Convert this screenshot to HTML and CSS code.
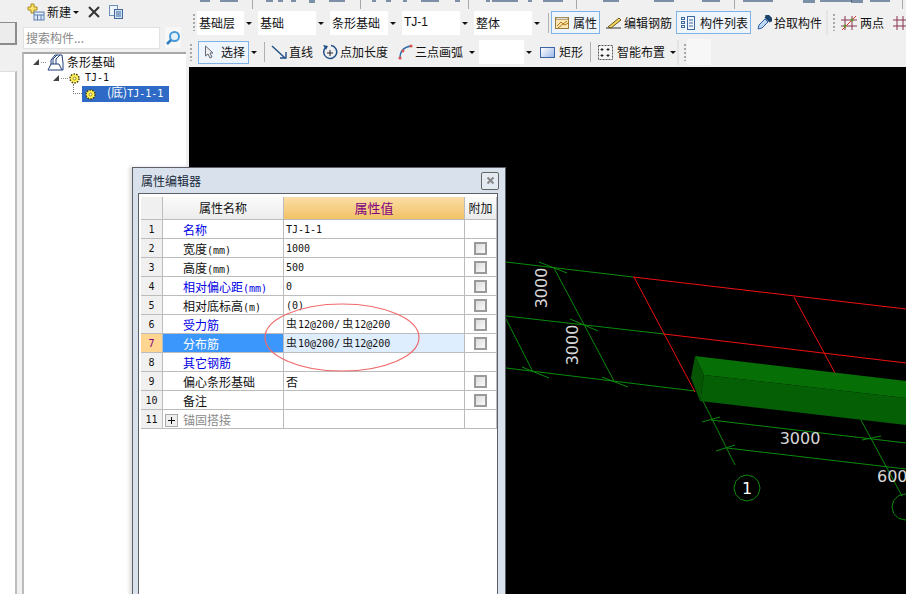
FILE: index.html
```html
<!DOCTYPE html>
<html lang="zh-CN">
<head>
<meta charset="utf-8">
<title>属性编辑器</title>
<link rel="stylesheet" href="styles.css">
</head>
<body>
<div class="app">
  <aside class="rail">
    <div class="rail-top"></div>
    <div class="rail-tab"></div>
    <div class="rail-rest"></div>
  </aside>

  <section class="panel">
    <div class="panel-tools">
      <svg class="ic new-ic" width="18" height="18" viewBox="0 0 18 18"><path d="M4 1h3v3h3v3H7v3H4V7H1V4h3z" fill="#ffe26a" stroke="#a88a1c"/><rect x="7" y="9" width="10" height="8" fill="#dfe9f7" stroke="#5c7fb0"/><path d="M7 12h10M10.500 12v5M14 12v5" stroke="#5c7fb0"/></svg>
      <span class="tool-text">新建</span><span class="caret"></span>
      <svg class="ic del-ic" width="14" height="14" viewBox="0 0 14 14"><path d="M2 2l10 10M12 2L2 12" stroke="#333" stroke-width="2"/></svg>
      <svg class="ic copy-ic" width="16" height="16" viewBox="0 0 16 16"><rect x="1.500" y="1.500" width="8" height="10" fill="#eef4fb" stroke="#6f8fb8"/><rect x="6.500" y="5.500" width="8" height="9" fill="#d3e3f6" stroke="#41689c"/><path d="M8 8h5M8 10h5M8 12h5" stroke="#41689c"/></svg>
    </div>
    <div class="search-row">
      <div class="search-box">搜索构件...</div>
      <div class="search-btn">
        <svg width="16" height="16" viewBox="0 0 16 16"><circle cx="9.500" cy="6.500" r="4.500" fill="#e6f3fd" stroke="#4a9ad8" stroke-width="2"/><path d="M6 10l-4 4" stroke="#2f7fc0" stroke-width="2.500"/></svg>
      </div>
    </div>
    <div class="tree">
      <div class="tree-row root">
        <span class="twist"></span><span class="dots"></span>
        <svg class="tree-ic" width="17" height="17" viewBox="0 0 17 17"><path d="M1 16l3-6V6l4-5h7l1 8v7z" fill="#fff" stroke="#1f3f7a"/><path d="M6 10V5l4-4M9 10V5l4-4M4 10h8l3 6" fill="none" stroke="#1f3f7a"/></svg>
        <span class="tree-label">条形基础</span>
      </div>
      <div class="tree-row child">
        <span class="twist"></span><span class="dots"></span>
        <svg class="gear" width="11" height="11" viewBox="0 0 11 11"><circle cx="5.500" cy="5.500" r="4.500" fill="#fff35a" stroke="#4a4010" stroke-width="1.500" stroke-dasharray="1.500 1.300"/><circle cx="5.500" cy="5.500" r="1.500" fill="#fffbe0" stroke="#a08a10"/></svg>
        <span class="tree-label mono">TJ-1</span>
      </div>
      <div class="tree-row leaf">
        <span class="elbow"></span>
        <div class="selected">
          <svg class="gear" width="11" height="11" viewBox="0 0 11 11"><circle cx="5.500" cy="5.500" r="4.500" fill="#fff35a" stroke="#4a4010" stroke-width="1.500" stroke-dasharray="1.500 1.300"/><circle cx="5.500" cy="5.500" r="1.500" fill="#fffbe0" stroke="#a08a10"/></svg>
          <span class="sel-label"><span class="cjk">(底)</span>TJ-1-1</span>
        </div>
      </div>
    </div>
  </section>

  <main class="work">
    <div class="strip">
      <svg width="717" height="9" viewBox="189 0 717 9">
        <g fill="#1d3f6b" fill-opacity=".55"><rect x="200" y="0" width="10" height="2"/><rect x="220" y="0" width="18" height="2"/><rect x="266" y="0" width="7" height="2"/><rect x="278" y="0" width="5" height="2"/><rect x="291" y="0" width="5" height="2"/><rect x="309" y="0" width="6" height="3"/><rect x="329" y="0" width="16" height="2"/><rect x="372" y="0" width="4" height="2"/><rect x="386" y="0" width="5" height="2"/><rect x="403" y="0" width="4" height="2"/><rect x="421" y="0" width="18" height="2"/><rect x="455" y="0" width="5" height="2"/><rect x="486" y="0" width="4" height="2"/><rect x="492" y="0" width="26" height="2"/><rect x="528" y="0" width="4" height="2"/><rect x="543" y="0" width="20" height="2"/><rect x="603" y="0" width="16" height="2"/><rect x="654" y="0" width="20" height="2"/><rect x="702" y="0" width="18" height="2"/><rect x="743" y="0" width="30" height="2"/><rect x="803" y="0" width="12" height="3"/><rect x="820" y="0" width="32" height="2"/><rect x="851" y="0" width="12" height="3"/><rect x="870" y="0" width="20" height="2"/></g>
        <g fill="#a8a8a8"><rect x="252" y="0" width="1" height="9"/><rect x="360" y="0" width="1" height="9"/><rect x="468" y="0" width="1" height="9"/><rect x="576" y="0" width="1" height="9"/><rect x="734" y="0" width="1" height="9"/><rect x="902" y="0" width="1" height="9"/></g>
      </svg>
    </div>

    <div class="toolbar bar-one">
      <span class="grip"></span>
      <div class="combo c58"><span class="combo-text">基础层</span><span class="drop"></span></div>
      <div class="combo c69"><span class="combo-text">基础</span><span class="drop"></span></div>
      <div class="combo c69"><span class="combo-text">条形基础</span><span class="drop"></span></div>
      <div class="combo c69"><span class="combo-text latin">TJ-1</span><span class="drop"></span></div>
      <div class="combo c69"><span class="combo-text">整体</span><span class="drop"></span></div>
      <span class="sep"></span>
      <div class="btn on b-attr">
        <svg width="16" height="16" viewBox="0 0 16 16"><rect x="1.500" y="2.500" width="13" height="11" fill="#fbe7b4" stroke="#9a7a3a"/><path d="M2 2.500h12v2H2z" fill="#ddd" stroke="#9a7a3a" stroke-width=".6"/><path d="M3 11l4-4 2 2 4-3M4 13l5-4 2 1 3-2" stroke="#b5760f" fill="none"/></svg>
        <span>属性</span>
      </div>
      <div class="btn b-edit">
        <svg width="17" height="16" viewBox="0 0 17 16"><path d="M1 13h15" stroke="#333"/><path d="M3 12L14 3l2 2L6 13z" fill="#f2d35c" stroke="#6a5a20"/></svg>
        <span>编辑钢筋</span>
      </div>
      <div class="btn on b-list">
        <svg width="14" height="16" viewBox="0 0 14 16"><g fill="none" stroke="#41689c"><rect x=".5" y="2.500" width="3" height="2"/><rect x=".5" y="6.500" width="3" height="2"/><rect x=".5" y="10.500" width="3" height="2"/><rect x="6.500" y="1.500" width="7" height="13"/></g><path d="M8 5h4M8 8h4M8 11h4" stroke="#41689c"/></svg>
        <span>构件列表</span>
      </div>
      <div class="btn b-pick">
        <svg width="16" height="16" viewBox="0 0 16 16"><path d="M2 14l1-4 6-6 3 3-6 6z" fill="#bcd8f5" stroke="#2d5f9e"/><path d="M9 2l5 5M10 1l2-1 4 4-1 2z" fill="#22507f" stroke="#1c4168" stroke-width="1.500"/></svg>
        <span>拾取构件</span>
      </div>
      <span class="bar-end"></span>
      <span class="grip g2"></span>
      <div class="btn b-two">
        <svg width="16" height="16" viewBox="0 0 16 16"><path d="M4 1v14M11 1v14M0 5h16M0 11h16" stroke="#8a3550"/><path d="M1 15L15 1" stroke="#d33"/><circle cx="4" cy="11" r="1.500" fill="#5a9a2a"/><circle cx="11" cy="5" r="1.500" fill="#5a9a2a"/></svg>
        <span>两点</span>
      </div>
      <svg class="well" width="14" height="16" viewBox="0 0 14 16"><path d="M4 1v14M10 1v14M0 5h14M0 11h14" stroke="#8a3550"/></svg>
    </div>

    <div class="toolbar bar-two">
      <span class="grip g3"></span>
      <div class="btn on b-select">
        <svg width="10" height="14" viewBox="0 0 10 14"><path d="M1.500 1v10l2.500-2 2 4 2-1-2-4h3z" fill="#eee" stroke="#667"/></svg>
        <span>选择</span>
      </div>
      <span class="caret c-select"></span>
      <span class="sep s-select"></span>
      <div class="btn b-line">
        <svg width="16" height="16" viewBox="0 0 16 16"><path d="M1 2l13 12" stroke="#1f4f86" stroke-width="1.400"/><path d="M9 14h6V8" fill="none" stroke="#1f4f86" stroke-width="1.400"/></svg>
        <span>直线</span>
      </div>
      <div class="btn b-len">
        <svg width="16" height="16" viewBox="0 0 16 16"><path d="M4 3a6.500 6.500 0 1 0 5-1.500" fill="none" stroke="#1f4f86" stroke-width="1.500"/><path d="M1 1l5 1-2 4z" fill="#1f4f86"/><path d="M8 6v6M5 9h6" stroke="#222"/></svg>
        <span>点加长度</span>
      </div>
      <div class="btn b-arc">
        <svg width="15" height="16" viewBox="0 0 15 16"><path d="M2 14C2 7 6 3 13 2" fill="none" stroke="#2f6da8" stroke-width="1.400"/><circle cx="2" cy="14" r="1.600" fill="#d9534f"/><circle cx="5" cy="7" r="1.400" fill="#d9534f"/><circle cx="13" cy="2" r="1.600" fill="#d9534f"/></svg>
        <span>三点画弧</span>
      </div>
      <span class="caret c-arc"></span>
      <div class="combo c56"><span class="combo-text"></span><span class="drop"></span></div>
      <div class="btn b-rect">
        <span class="rect-ic"></span>
        <span>矩形</span>
      </div>
      <span class="sep s-rect"></span>
      <div class="btn b-smart">
        <svg width="15" height="15" viewBox="0 0 15 15"><rect x=".5" y=".5" width="14" height="14" fill="#f5f5f5" stroke="#555" stroke-dasharray="2 1"/><path d="M4 3v3M2.500 4.500h3M10 3v3M8.500 4.500h3M4 9v3M2.500 10.500h3M10 9v3M8.500 10.500h3" stroke="#222"/></svg>
        <span>智能布置</span>
      </div>
      <span class="caret c-smart"></span>
      <span class="bar-end"></span>
      <span class="grip g4"></span>
      <span class="blank"></span>
    </div>

    <div class="canvas">
      <svg class="scene" width="717" height="527" viewBox="189 67 717 527">
        <g stroke="#0a8a0a" fill="none">
          <path d="M506 262L633 277M506 316L664 334M506 368L695 391M554 268L614 381M506 319L533 372M699 393L735 465M861 420L902 496M711 420L906 443M727 448L906 469"/>
          <path d="M539 262L567 273M570 319L598 331M602 377L628 387M522 367L549 378M702 422L720 417M862 440L881 436M716 451L735 445"/>
          <polygon id="axis" points="760,488 758.3,494.500 753.500,499.300 747,501 740.500,499.300 735.700,494.500 734,488 735.700,481.500 740.500,476.700 747,475 753.500,476.700 758.300,481.500"/>
          <use href="#axis" x="158" y="19"/>
        </g>
        <path d="M633 277L906 309M664 334L906 363M634 277L695 392M794 297L835 373" stroke="#f01010" fill="none"/>
        <path d="M695 356L906 381V398L704 375z" fill="#067006"/>
        <path d="M704 375L906 398V425L700 401z" fill="#055f05"/>
        <path d="M695 356L704 375L700 401L691 378z" fill="#055505"/>
        <g class="dim">
          <text x="800" y="444" text-anchor="middle">3000</text>
          <text x="877" y="482">600</text>
          <text class="axis-no" x="747" y="494" text-anchor="middle">1</text>
          <text transform="translate(547 288) rotate(-90)" text-anchor="middle">3000</text>
          <text transform="translate(578 345) rotate(-90)" text-anchor="middle">3000</text>
        </g>
      </svg>
    </div>
  </main>
</div>

<div class="dialog">
  <header class="dialog-title">
    <span>属性编辑器</span>
    <span class="close"><svg width="9" height="9" viewBox="0 0 9 9"><path d="M1.500 1.500l6 6M7.500 1.500l-6 6" stroke="#888" stroke-width="2"/></svg></span>
  </header>
  <div class="dialog-body">
    <table class="grid">
      <colgroup><col class="col-i"><col class="col-n"><col class="col-v"><col class="col-a"></colgroup>
      <thead>
        <tr><th class="idx"></th><th>属性名称</th><th class="hot">属性值</th><th>附加</th></tr>
      </thead>
      <tbody>
        <tr><td class="idx">1</td><td class="name blue">名称</td><td class="val">TJ-1-1</td><td></td></tr>
        <tr><td class="idx">2</td><td class="name">宽度<span class="unit">(mm)</span></td><td class="val">1000</td><td class="chk"><span class="box"></span></td></tr>
        <tr><td class="idx">3</td><td class="name">高度<span class="unit">(mm)</span></td><td class="val">500</td><td class="chk"><span class="box"></span></td></tr>
        <tr><td class="idx">4</td><td class="name blue">相对偏心距<span class="unit">(mm)</span></td><td class="val">0</td><td class="chk"><span class="box"></span></td></tr>
        <tr><td class="idx">5</td><td class="name">相对底标高<span class="unit">(m)</span></td><td class="val">(0)</td><td class="chk"><span class="box"></span></td></tr>
        <tr><td class="idx">6</td><td class="name blue">受力筋</td><td class="val"><span class="bar-sym">虫</span>12@200/ <span class="bar-sym">虫</span>12@200</td><td class="chk"><span class="box"></span></td></tr>
        <tr class="current"><td class="idx">7</td><td class="name">分布筋</td><td class="val"><span class="bar-sym">虫</span>10@200/ <span class="bar-sym">虫</span>12@200</td><td class="chk"><span class="box"></span></td></tr>
        <tr><td class="idx">8</td><td class="name blue">其它钢筋</td><td class="val"></td><td></td></tr>
        <tr><td class="idx">9</td><td class="name">偏心条形基础</td><td class="val cn">否</td><td class="chk"><span class="box"></span></td></tr>
        <tr><td class="idx">10</td><td class="name">备注</td><td class="val"></td><td class="chk"><span class="box"></span></td></tr>
        <tr><td class="idx">11</td><td class="name grey"><span class="plus"></span>锚固搭接</td><td class="val"></td><td></td></tr>
      </tbody>
    </table>
  </div>
</div>

<svg class="mark" width="160" height="72" viewBox="0 0 160 72"><ellipse cx="79" cy="35.500" rx="77" ry="33.500" fill="none" stroke="#f06a6a" stroke-width="1.200"/></svg>
</body>
</html>
```

FILE: styles.css
```css
* { box-sizing: border-box; }
html, body { margin: 0; padding: 0; height: 594px; overflow: hidden; }
body { font: 12px/16px "Noto Sans CJK SC", "Liberation Sans", sans-serif; color: #111; background: #f0f0f0; }
svg { display: block; flex: none; }

.app { display: flex; height: 594px; }

/* left rail */
.rail { width: 17px; flex: none; display: flex; flex-direction: column; }
.rail-top { height: 22px; background: #f0f0f0; }
.rail-tab { height: 23px; background: #ececec; border: 1px solid #8c8c8c; border-left: 0; border-width: 1px 2px 2px 0; }
.rail-rest { flex: 1; background: #fff; border-right: 2px solid #bdbdbd; border-top: 1px solid #ddd; margin-top: 26px; }

/* component panel */
.panel { width: 169px; flex: none; margin-right: 3px; display: flex; flex-direction: column; }
.panel-tools { height: 24px; margin-bottom: 3px; display: flex; align-items: center; padding-left: 10px; }
.tool-text { margin-left: 2px; font-size: 12px; }
.caret { width: 0; height: 0; border: 3px solid transparent; border-top: 3px solid #111; border-bottom: 0; margin-left: 2px; flex: none; }
.del-ic { margin-left: 8px; }
.copy-ic { margin-left: 7px; }
.search-row { display: flex; height: 24px; padding-left: 6px; }
.search-box { width: 137px; height: 22px; background: #fff; border: 1px solid #e2e2e2; color: #8a8a8a; font-size: 12px; line-height: 20px; padding-left: 2px; }
.search-btn { margin-left: 5px; width: 16px; height: 21px; display: flex; align-items: center; background: #f7f7f7; }

.tree { flex: 1; margin-left: 5px; margin-top: 1px; background: #fff; border-top: 2px solid #a8a8a8; border-left: 2px solid #bcbcbc; position: relative; }
.tree-row { display: flex; align-items: center; height: 16px; }
.root { padding-left: 9px; }
.root .dots { width: 5px; }
.child { padding-left: 29px; }
.leaf { padding-left: 49px; }
.twist { width: 0; height: 0; border-style: solid; border-width: 0 0 6px 6px; border-color: transparent transparent #444 transparent; flex: none; }
.dots { width: 7px; border-top: 1px dotted #888; margin: 0 1px 0 2px; flex: none; }
.tree-label { margin-left: 3px; }
.mono { font: 10px/16px "DejaVu Sans Mono", monospace; margin-left: 5px; }
.gear { flex: none; }
.elbow { width: 9px; height: 10px; margin-top: -10px; border-left: 1px dotted #777; border-bottom: 1px dotted #777; flex: none; }
.selected { width: 87px; height: 16px; background: #2f6bc6; color: #fff; display: flex; align-items: center; padding-left: 3px; }
.sel-label { font: 10px/16px "DejaVu Sans Mono", monospace; margin-left: 11px; white-space: nowrap; }
.cjk { font: 12px/12px "Noto Sans CJK SC", sans-serif; }

/* workspace */
.work { flex: 1; min-width: 0; display: flex; flex-direction: column; }
.strip { height: 9px; overflow: hidden; }
.toolbar { display: flex; align-items: center; position: relative; white-space: nowrap; }
.bar-one { height: 25px; margin-top: 1px; padding-left: 4px; }
.bar-two { height: 26px; margin-top: 4px; padding-left: 1px; }
.grip { width: 2px; height: 17px; flex: none; background: repeating-linear-gradient(#a8a8a8 0 2px, transparent 2px 4px); }
.combo { height: 24px; display: flex; background: #fff; flex: none; margin-right: 3px; }
.combo-text { flex: 1; line-height: 23px; padding-left: 2px; overflow: hidden; }
.latin { font-family: "Liberation Sans", sans-serif; }
.drop { width: 11px; background: #f0f0f0; position: relative; }
.drop::after { content: ""; position: absolute; left: 2px; top: 11px; border: 3px solid transparent; border-top: 3px solid #111; border-bottom: 0; }
.c58 { width: 58px; margin-left: 2px; }
.c69 { width: 69px; }
.c56 { width: 56px; margin-left: 4px; margin-right: 0; }
.sep { width: 1px; height: 20px; background: #b0b0b0; flex: none; margin: 0 2px 0 2px; }
.btn { height: 23px; display: flex; align-items: center; gap: 3px; flex: none; border: 1px solid transparent; padding: 0 1px; }
.btn.on { border: 1px solid #7fb3e6; background: #eef5fc; }
.b-attr { width: 49px; padding-left: 2px; }
.b-edit { margin-left: 3px; gap: 2px; width: 72px; }
.b-list { margin-left: 1px; width: 75px; gap: 5px; padding-left: 4px; }
.b-pick { margin-left: 3px; width: 71px; gap: 2px; }
.bar-end { width: 2px; height: 25px; background: #e4e4e4; flex: none; margin-left: 1px; }
.g2 { margin-left: 5px; }
.b-two { margin-left: 4px; gap: 3px; }
.well { margin-left: 7px; }
.g3 { margin-left: 0; }
.b-select { margin-left: 6px; width: 51px; gap: 7px; padding-left: 5px; }
.c-select { margin-left: 2px; }
.s-select { margin: 0 4px 0 7px; }
.b-line { gap: 2px; }
.b-len { margin-left: 5px; gap: 2px; }
.b-arc { margin-left: 6px; gap: 2px; }
.c-arc { margin-left: 4px; }
.b-rect { margin-left: 3px; gap: 4px; }
.rect-ic { width: 15px; height: 11px; border: 1px solid #3c64a8; background: linear-gradient(135deg, #fff, #9db8e8); flex: none; }
.s-rect { margin: 0 5px 0 5px; }
.b-smart { gap: 4px; }
.c-smart { margin-left: 3px; }
.g4 { margin-left: 5px; }
.blank { width: 24px; height: 26px; background: #f7f7f7; margin-left: 1px; flex: none; }
.canvas { flex: 1; margin-top: 2px; background: #000; min-height: 0; }
.dim { fill: #d8d8d8; font: 16px "DejaVu Sans", sans-serif; }
.axis-no { fill: #fff; }

/* floating property dialog */
.dialog { position: absolute; left: 132px; top: 167px; width: 374px; height: 440px; background: #d8e1ec; border: 1px solid #5c6066; box-shadow: -3px 0 3px rgba(0,0,0,.12); padding: 0 7px 0 5px; }
.dialog-title { height: 25px; display: flex; align-items: center; justify-content: space-between; color: #1a2a3a; padding: 0 0 0 3px; }
.close { width: 18px; height: 18px; border: 1px solid #666; border-radius: 2px; margin-right: -1px; display: flex; align-items: center; justify-content: center; background: #e4eaf1; }
.dialog-body { height: 410px; background: #fff; border: 1px solid #5c6066; border-width: 1px 1px 0 1px; padding: 3px 0 0 2px; }

.grid { width: 356px; table-layout: fixed; border-collapse: separate; border-spacing: 0; }
.col-i { width: 22px; } .col-n { width: 121px; } .col-v { width: 181px; } .col-a { width: 32px; }
.grid th, .grid td { padding: 0; border-right: 1px solid #bcbcbc; border-bottom: 1px solid #bcbcbc; font-weight: 400; overflow: hidden; white-space: nowrap; }
.grid th { height: 23px; background: linear-gradient(#fbfbfb, #ececec); text-align: center; line-height: 20px; }
.grid th.hot { background: linear-gradient(#fbdda6, #f2c266); color: #800080; font-size: 13px; }
.grid td { height: 19px; line-height: 16px; }
.grid .idx { background: #f0f0f0; text-align: center; font: 10px/16px "DejaVu Sans Mono", monospace; padding-top: 1px; }
.grid .name { padding: 1px 0 0 20px; }
.grid .blue { color: #0000e6; }
.grid .grey { color: #8a8a8a; padding-left: 2px; }
.grid .val { padding: 1px 0 0 2px; font: 10px/16px "DejaVu Sans Mono", monospace; word-spacing: -4px; }
.grid .val.cn { font: 12px/16px "Noto Sans CJK SC", sans-serif; }
.bar-sym { font: 11px/10px "Noto Sans CJK SC", sans-serif; margin-right: 1px; }
.unit { font: 10px/10px "DejaVu Sans Mono", monospace; }
.grid .chk { text-align: center; }
.box { display: block; width: 13px; height: 13px; margin: 1px auto 0; border: 2px solid #9a9a9a; background: linear-gradient(135deg, #dcdcdc, #fafafa); }
.plus { display: inline-block; width: 13px; height: 13px; border: 1px solid #aaa; margin-right: 5px; vertical-align: -2px; background: linear-gradient(#111, #111) center/7px 1px no-repeat, linear-gradient(#111, #111) center/1px 7px no-repeat, #eee; }
tr.current .idx { background: #ffd590; color: #800080; }
tr.current .name { background: #3b97fb; color: #fff; }
tr.current .val { background: #deeeff; }

.mark { position: absolute; left: 263px; top: 302px; }
```
